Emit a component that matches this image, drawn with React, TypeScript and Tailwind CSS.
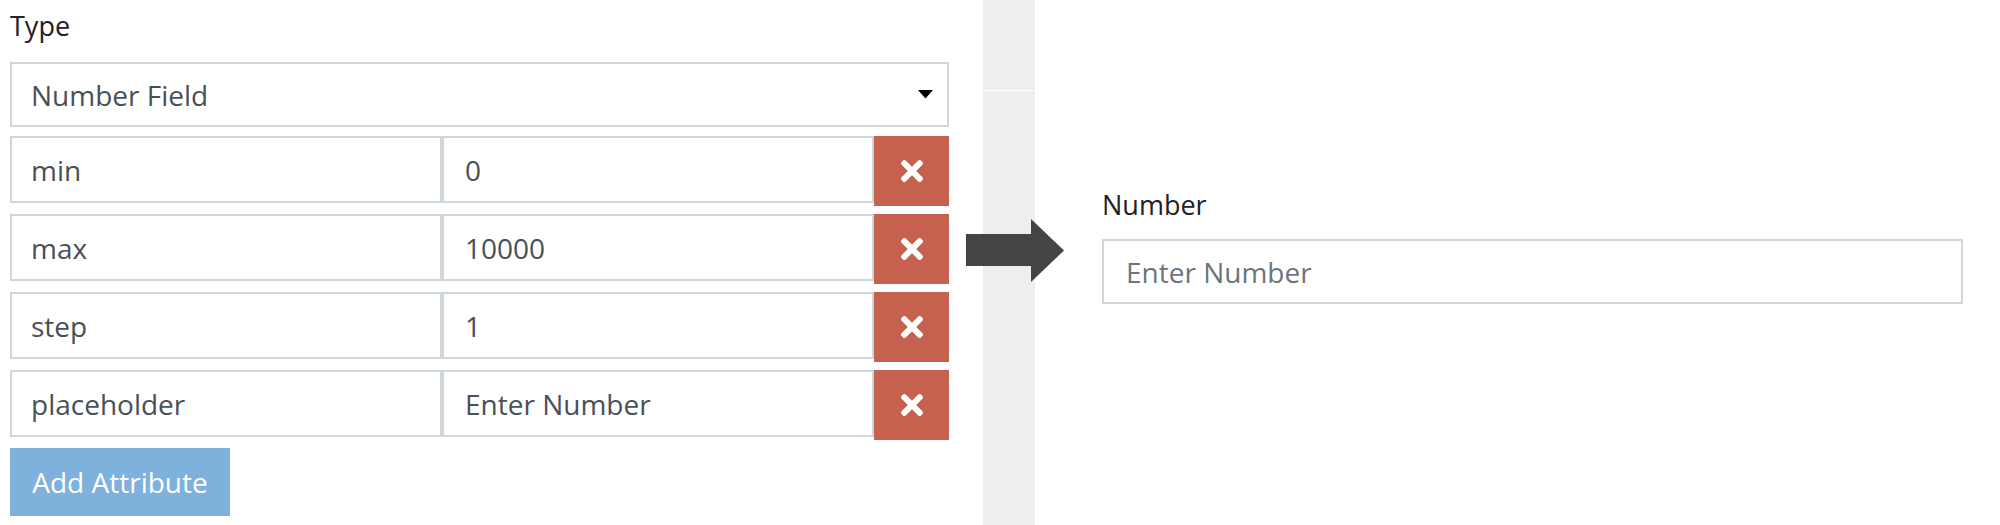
import { FaTimes } from 'react-icons/fa';

interface Attribute {
    key: string;
    value: string;
}

const ATTRIBUTES: ReadonlyArray<Attribute> = [
    { key: 'min', value: '0' },
    { key: 'max', value: '10000' },
    { key: 'step', value: '1' },
    { key: 'placeholder', value: 'Enter Number' },
];

const FONT = "font-['Open_Sans','Liberation_Sans',sans-serif]";

export default function App() {
    return (
        <div className={`flex h-[525px] w-[2000px] overflow-hidden bg-white ${FONT}`}>
            <FieldEditor />
            <Divider />
            <Preview />
        </div>
    );
}

function FieldEditor() {
    return (
        <section className="ml-[10px] w-[939px] shrink-0 pt-[6px]">
            <label className="mb-[16px] block text-[27px] leading-[40px] text-[#222]">Type</label>

            <div className="mb-[9px] flex h-[65px] items-center justify-between border-2 border-[#cfd6dc] pl-[19px] pr-[14px]">
                <span className="text-[28px] leading-none text-[#495057]">Number Field</span>
                <svg width="15" height="9" viewBox="0 0 15 9" aria-hidden>
                    <path d="M0 0H15L7.5 8.5Z" fill="#000" />
                </svg>
            </div>

            {ATTRIBUTES.map((attr) => (
                <AttributeRow key={attr.key} attr={attr} />
            ))}

            <button
                type="button"
                className="flex h-[68px] w-[220px] items-center justify-center bg-[#7eb1dc] text-[28px] text-white"
            >
                Add Attribute
            </button>
        </section>
    );
}

function AttributeRow({ attr }: Readonly<{ attr: Attribute }>) {
    return (
        <div className="mb-[8px] flex h-[70px] items-start">
            <div className="flex h-[67px] w-[432px] items-center border-2 border-[#cfd6dc] pl-[19px] text-[28px] text-[#495057]">
                {attr.key}
            </div>
            <div className="flex h-[67px] w-[432px] items-center border-2 border-[#cfd6dc] pl-[21px] text-[28px] text-[#495057]">
                {attr.value}
            </div>
            <button
                type="button"
                aria-label="Remove attribute"
                className="flex h-[70px] w-[75px] items-center justify-center bg-[#c5614e] text-white"
            >
                <FaTimes size={32} />
            </button>
        </div>
    );
}

function Divider() {
    return (
        <div className="relative ml-[34px] flex h-full w-[52px] shrink-0 flex-col">
            <div className="h-[90px] bg-[#eeeeee]" />
            <div className="h-px bg-white" />
            <div className="flex-1 bg-[#eeeeee]" />
            {/* arrow sits over the gray strip */}
            <svg
                className="absolute left-[-17px] top-[219px]"
                width="98"
                height="63"
                viewBox="0 0 98 63"
                aria-hidden
            >
                <path d="M0 15H65V0L98 31.5L65 63V47H0Z" fill="#444" />
            </svg>
        </div>
    );
}

function Preview() {
    return (
        <section className="ml-[67px] w-[861px] shrink-0 pt-[185px]">
            <label className="mb-[14px] block text-[27px] leading-[40px] text-[#222]">Number</label>
            <div className="flex h-[65px] items-center border-2 border-[#cfd6dc] pl-[22px] text-[28px] text-[#6c757d]">
                Enter Number
            </div>
        </section>
    );
}
